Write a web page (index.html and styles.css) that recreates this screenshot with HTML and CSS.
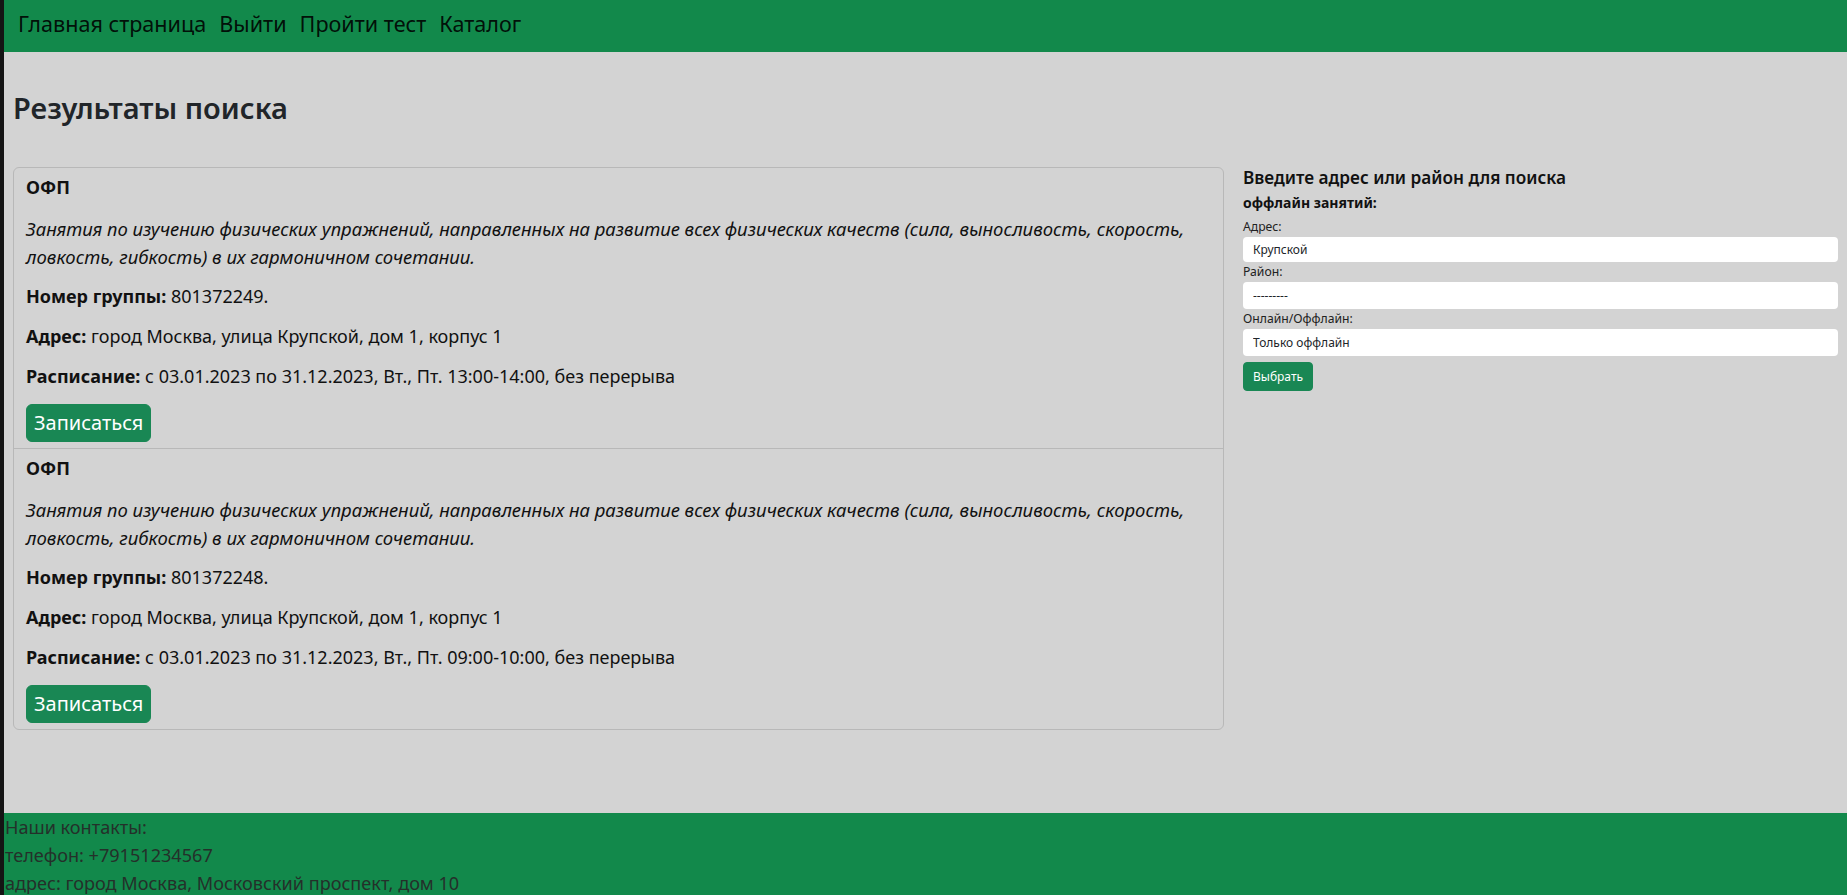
FILE: index.html
```html
<!DOCTYPE html>
<html lang="ru">
<head>
<meta charset="utf-8">
<title>Результаты поиска</title>
<link rel="stylesheet" href="styles.css">
</head>
<body>
<div class="page">
  <nav class="topnav">
    <a class="nav-link" href="#">Главная страница</a>
    <a class="nav-link" href="#">Выйти</a>
    <a class="nav-link" href="#">Пройти тест</a>
    <a class="nav-link" href="#">Каталог</a>
  </nav>

  <main class="main">
    <h2 class="page-title">Результаты поиска</h2>
    <div class="layout">
      <div class="results">
        <div class="result">
          <h5 class="result-title">ОФП</h5>
          <p class="result-desc">Занятия по изучению физических упражнений, направленных на развитие всех физических качеств (сила, выносливость, скорость, ловкость, гибкость) в их гармоничном сочетании.</p>
          <p class="result-line"><b>Номер группы:</b> 801372249.</p>
          <p class="result-line"><b>Адрес:</b> город Москва, улица Крупской, дом 1, корпус 1</p>
          <p class="result-line"><b>Расписание:</b> с 03.01.2023 по 31.12.2023, Вт., Пт. 13:00-14:00, без перерыва</p>
          <button class="btn-enroll" type="button">Записаться</button>
        </div>
        <div class="result">
          <h5 class="result-title">ОФП</h5>
          <p class="result-desc">Занятия по изучению физических упражнений, направленных на развитие всех физических качеств (сила, выносливость, скорость, ловкость, гибкость) в их гармоничном сочетании.</p>
          <p class="result-line"><b>Номер группы:</b> 801372248.</p>
          <p class="result-line"><b>Адрес:</b> город Москва, улица Крупской, дом 1, корпус 1</p>
          <p class="result-line"><b>Расписание:</b> с 03.01.2023 по 31.12.2023, Вт., Пт. 09:00-10:00, без перерыва</p>
          <button class="btn-enroll" type="button">Записаться</button>
        </div>
      </div>

      <form class="search">
        <div class="search-title">Введите адрес или район для поиска</div>
        <div class="search-sub">оффлайн занятий:</div>
        <label class="field-label" for="addr">Адрес:</label>
        <input class="field field-input" id="addr" type="text" value="Крупской">
        <label class="field-label" for="district">Район:</label>
        <select class="field field-select" id="district"><option>---------</option></select>
        <label class="field-label" for="mode">Онлайн/Оффлайн:</label>
        <select class="field field-select" id="mode"><option>Только оффлайн</option></select>
        <button class="btn-choose" type="button">Выбрать</button>
      </form>
    </div>
  </main>

  <footer class="footer">
    <p class="footer-line">Наши контакты:</p>
    <p class="footer-line">телефон: +79151234567</p>
    <p class="footer-line">адрес: город Москва, Московский проспект, дом 10</p>
  </footer>
</div>
</body>
</html>
```

FILE: styles.css
```css
* { box-sizing: border-box; }

html, body {
  margin: 0;
  padding: 0;
}

body {
  background: #141414;
  font-family: "Noto Sans", "Open Sans", sans-serif;
  font-size: 16px;
  line-height: 1.5;
  color: #212529;
}

.page {
  margin-left: 4px;
  background: #d3d3d3;
  min-height: 100vh;
  display: flex;
  flex-direction: column;
}

.topnav {
  background: #12894b;
  height: 52px;
  display: flex;
  align-items: center;
  gap: 13px;
  padding: 0 0 4px 14px;
}

.nav-link {
  color: rgba(0, 0, 0, 0.9);
  text-decoration: none;
  font-size: 21.6px;
  line-height: 30px;
}

.main {
  padding: 37px 9px 83px 9px;
}

.page-title {
  margin: 0 0 41px 0;
  font-size: 29px;
  font-weight: 600;
  line-height: 37px;
  color: #212529;
}

.layout {
  display: grid;
  grid-template-columns: 1211fr 595fr;
  column-gap: 19px;
  align-items: start;
}

.results {
  border: 1px solid #b8b8b8;
  border-radius: 6px;
}

.result {
  padding: 8px 12px 6px 12px;
}

.result + .result {
  border-top: 1px solid #b8b8b8;
}

.result-title {
  margin: 0 0 17px 0;
  font-size: 18px;
  line-height: 22px;
  font-weight: 700;
  color: #111;
}

.result-desc {
  margin: 0 0 13px 0;
  font-size: 18.5px;
  line-height: 28px;
  font-style: italic;
  color: #111;
}

.result-line {
  margin: 0 0 16px 0;
  font-size: 18px;
  line-height: 24px;
  color: #111;
}

.result-line b { font-weight: 700; }

.btn-enroll {
  display: block;
  height: 38px;
  padding: 0 7px;
  border: 1px solid #198754;
  border-radius: 6px;
  background: #198754;
  color: #fff;
  font-family: inherit;
  font-size: 20px;
  line-height: 36px;
}

.search {
  display: flex;
  flex-direction: column;
  align-items: stretch;
}

.search-title {
  font-size: 17.2px;
  font-weight: 600;
  line-height: 21px;
  color: #111;
}

.search-sub {
  margin-top: 5px;
  font-size: 14px;
  font-weight: 700;
  line-height: 20px;
  color: #111;
}

.field-label {
  margin-top: 5px;
  font-size: 12.2px;
  line-height: 17px;
  color: #222;
}

.field {
  margin-top: 2px;
  width: 100%;
  border: 0;
  border-radius: 4px;
  background: #fff;
  font-family: inherit;
  font-size: 12px;
  color: #212529;
  padding: 0 10px;
  outline: none;
}

.field-input {
  height: 25px;
}

.field-select {
  height: 27px;
  -webkit-appearance: none;
  appearance: none;
}

.field-input + .field-label { margin-top: 1px; }
.field-select + .field-label { margin-top: 1px; }

.btn-choose {
  align-self: flex-start;
  margin-top: 6px;
  height: 29px;
  padding: 0 9px;
  border: 1px solid #198754;
  border-radius: 4px;
  background: #198754;
  color: #fff;
  font-family: inherit;
  font-size: 12px;
  line-height: 27px;
}

.footer {
  background: #12894b;
  padding: 0 0 0 1px;
}

.footer-line {
  margin: 0;
  font-size: 18.1px;
  line-height: 28px;
  color: #24302a;
}
```
